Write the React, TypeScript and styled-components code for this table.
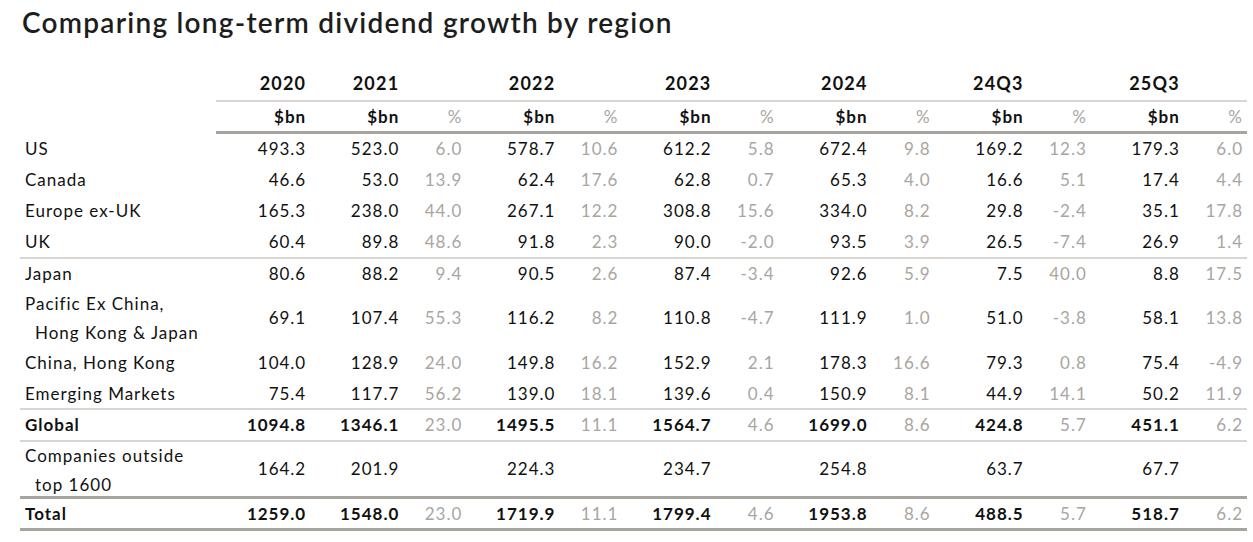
import React from "react";
import styled, { createGlobalStyle } from "styled-components";

const GlobalStyle = createGlobalStyle`
  html, body {
    margin: 0;
    padding: 0;
    background: #ffffff;
  }
  body {
    font-family: "Lato", "Open Sans", sans-serif;
    color: #111;
  }
`;

const Page = styled.div`
  width: 1253px;
  height: 542px;
  padding: 4px 0 0 20px;
  box-sizing: border-box;
  overflow: hidden;
`;

const Title = styled.h1`
  margin: 0 0 0 2px;
  font-size: 28px;
  font-weight: 600;
  line-height: 36px;
  color: #1d1d1d;
  letter-spacing: 1.25px;
  white-space: nowrap;
`;

const Table = styled.table`
  margin-top: 27px;
  border-collapse: collapse;
  table-layout: fixed;
  width: 1227px;
  font-size: 17px;
  letter-spacing: 1px;
`;

const Col = styled.col<{ $w: number }>`
  width: ${(p) => p.$w}px;
`;

const YearCell = styled.th`
  text-align: right;
  font-weight: 700;
  font-size: 18px;
  letter-spacing: 1.2px;
  height: 31px;
  padding: 0 4px 2px 0;
  vertical-align: middle;
  white-space: nowrap;
`;

const YearRow = styled.tr`
  & > th:not(:first-child) {
    border-bottom: 2px solid #d9d5d1;
  }
`;

const UnitRow = styled.tr`
  & > th:not(:first-child) {
    border-bottom: 3px solid #a8a4a0;
  }
`;

const UnitCell = styled.th<{ $pct?: boolean }>`
  text-align: right;
  font-weight: ${(p) => (p.$pct ? 400 : 700)};
  color: ${(p) => (p.$pct ? "#a9a5a1" : "#111")};
  height: 29px;
  padding: 0 4px 0 0;
  white-space: nowrap;
`;

const Row = styled.tr<{ $line?: "light" | "dark"; $h: number }>`
  height: ${(p) => p.$h}px;
  border-bottom: ${(p) =>
    p.$line === "light"
      ? "2px solid #d9d5d1"
      : p.$line === "dark"
        ? "3px solid #a8a4a0"
        : "none"};
`;

const Label = styled.td<{ $bold?: boolean; $tight?: boolean }>`
  padding: 0 0 0 5px;
  font-weight: ${(p) => (p.$bold ? 700 : 400)};
  line-height: ${(p) => (p.$tight ? 27 : 29)}px;
  white-space: nowrap;
`;

const Indent = styled.span<{ $tight?: boolean }>`
  display: block;
  padding-left: 10px;
  margin-top: ${(p) => (p.$tight ? 2 : 0)}px;
  margin-bottom: ${(p) => (p.$tight ? -2 : 0)}px;
`;

const Value = styled.td<{ $bold?: boolean }>`
  text-align: right;
  padding: 0 4px 0 0;
  font-weight: ${(p) => (p.$bold ? 700 : 400)};
  white-space: nowrap;
`;

const Pct = styled.td`
  text-align: right;
  padding: 0 4px 0 0;
  color: #a9a5a1;
  white-space: nowrap;
`;

type RowData = {
  label: string;
  second?: string;
  v2020: string;
  pairs: [string, string][];
  bold?: boolean;
  line?: "light" | "dark";
  height?: number;
  tight?: boolean;
};

const periods = ["2021", "2022", "2023", "2024", "24Q3", "25Q3"];

const rows: RowData[] = [
  {
    label: "US",
    v2020: "493.3",
    pairs: [["523.0", "6.0"], ["578.7", "10.6"], ["612.2", "5.8"], ["672.4", "9.8"], ["169.2", "12.3"], ["179.3", "6.0"]],
  },
  {
    label: "Canada",
    v2020: "46.6",
    pairs: [["53.0", "13.9"], ["62.4", "17.6"], ["62.8", "0.7"], ["65.3", "4.0"], ["16.6", "5.1"], ["17.4", "4.4"]],
  },
  {
    label: "Europe ex-UK",
    v2020: "165.3",
    pairs: [["238.0", "44.0"], ["267.1", "12.2"], ["308.8", "15.6"], ["334.0", "8.2"], ["29.8", "-2.4"], ["35.1", "17.8"]],
  },
  {
    label: "UK",
    v2020: "60.4",
    pairs: [["89.8", "48.6"], ["91.8", "2.3"], ["90.0", "-2.0"], ["93.5", "3.9"], ["26.5", "-7.4"], ["26.9", "1.4"]],
    line: "light",
  },
  {
    label: "Japan",
    v2020: "80.6",
    pairs: [["88.2", "9.4"], ["90.5", "2.6"], ["87.4", "-3.4"], ["92.6", "5.9"], ["7.5", "40.0"], ["8.8", "17.5"]],
  },
  {
    label: "Pacific Ex China,",
    second: "Hong Kong & Japan",
    v2020: "69.1",
    pairs: [["107.4", "55.3"], ["116.2", "8.2"], ["110.8", "-4.7"], ["111.9", "1.0"], ["51.0", "-3.8"], ["58.1", "13.8"]],
    height: 58,
  },
  {
    label: "China, Hong Kong",
    v2020: "104.0",
    pairs: [["128.9", "24.0"], ["149.8", "16.2"], ["152.9", "2.1"], ["178.3", "16.6"], ["79.3", "0.8"], ["75.4", "-4.9"]],
  },
  {
    label: "Emerging Markets",
    v2020: "75.4",
    pairs: [["117.7", "56.2"], ["139.0", "18.1"], ["139.6", "0.4"], ["150.9", "8.1"], ["44.9", "14.1"], ["50.2", "11.9"]],
    line: "light",
  },
  {
    label: "Global",
    v2020: "1094.8",
    pairs: [["1346.1", "23.0"], ["1495.5", "11.1"], ["1564.7", "4.6"], ["1699.0", "8.6"], ["424.8", "5.7"], ["451.1", "6.2"]],
    bold: true,
    line: "light",
  },
  {
    label: "Companies outside",
    second: "top 1600",
    v2020: "164.2",
    pairs: [["201.9", ""], ["224.3", ""], ["234.7", ""], ["254.8", ""], ["63.7", ""], ["67.7", ""]],
    height: 54,
    tight: true,
    line: "dark",
  },
  {
    label: "Total",
    v2020: "1259.0",
    pairs: [["1548.0", "23.0"], ["1719.9", "11.1"], ["1799.4", "4.6"], ["1953.8", "8.6"], ["488.5", "5.7"], ["518.7", "6.2"]],
    bold: true,
    line: "dark",
  },
];

export default function App() {
  return (
    <>
      <GlobalStyle />
      <Page>
        <Title>Comparing long-term dividend growth by region</Title>
        <Table>
          <colgroup>
            <Col $w={196} />
            <Col $w={94} />
            {periods.map((p) => (
              <React.Fragment key={p}>
                <Col $w={93} />
                <Col $w={63} />
              </React.Fragment>
            ))}
          </colgroup>
          <thead>
            <YearRow>
              <YearCell />
              <YearCell>2020</YearCell>
              {periods.map((p) => (
                <React.Fragment key={p}>
                  <YearCell>{p}</YearCell>
                  <YearCell />
                </React.Fragment>
              ))}
            </YearRow>
            <UnitRow>
              <UnitCell />
              <UnitCell>$bn</UnitCell>
              {periods.map((p) => (
                <React.Fragment key={p}>
                  <UnitCell>$bn</UnitCell>
                  <UnitCell $pct>%</UnitCell>
                </React.Fragment>
              ))}
            </UnitRow>
          </thead>
          <tbody>
            {rows.map((r, i) => (
              <Row key={i} $line={r.line} $h={r.height ?? 31.25}>
                <Label $bold={r.bold} $tight={r.tight}>
                  {r.label}
                  {r.second && <Indent $tight={r.tight}>{r.second}</Indent>}
                </Label>
                <Value $bold={r.bold}>{r.v2020}</Value>
                {r.pairs.map(([v, pct], j) => (
                  <React.Fragment key={j}>
                    <Value $bold={r.bold}>{v}</Value>
                    <Pct>{pct}</Pct>
                  </React.Fragment>
                ))}
              </Row>
            ))}
          </tbody>
        </Table>
      </Page>
    </>
  );
}
